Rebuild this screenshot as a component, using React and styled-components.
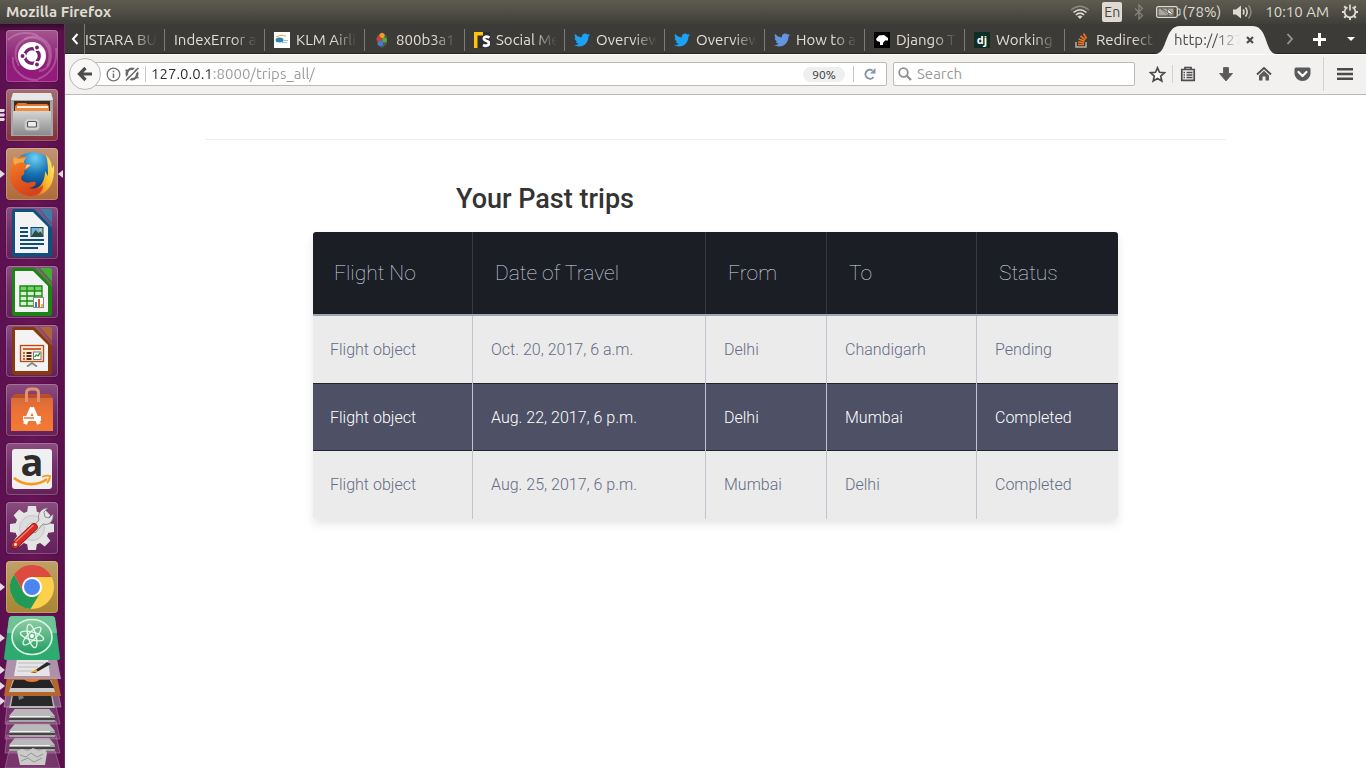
import React from 'react'
import styled, { createGlobalStyle, css } from 'styled-components'
import { FaTwitter } from 'react-icons/fa'

const uiFont = 'Ubuntu, "Noto Sans", "Open Sans", sans-serif'

const GlobalStyle = createGlobalStyle`
  * { box-sizing: border-box; }
  body { margin: 0; background: #fff; }
  button { border: 0; padding: 0; background: none; font: inherit; color: inherit; }
  svg { display: block; flex: none; }
`

/* ---------- top panel ---------- */

const Desktop = styled.div`
  display: flex; flex-direction: column; min-height: 100vh;
  font-family: ${uiFont};
`
const TopPanel = styled.header`
  display: flex; align-items: center; justify-content: space-between;
  height: 24px; padding: 0 7px 0 6px;
  background: linear-gradient(#5e5c50, #55534a 30%, #3f3e39);
  color: #dfdbd2; font-size: 15px; line-height: 20px;
`
const AppName = styled.div`
  font-size: 15px; font-weight: 700; font-family: Ubuntu, "Open Sans", sans-serif;
`
const Indicators = styled.div`
  display: flex; align-items: center; gap: 12px;
`
const Indicator = styled.button`
  display: flex; align-items: center; gap: 1px; height: 24px; white-space: nowrap;
`
const Lang = styled.span`
  width: 20px; height: 20px; border-radius: 2px; background: #dfdbd2; color: #45433d;
  font-size: 14px; line-height: 20px; text-align: center;
`

const WifiIcon = () => (
  <svg width="20" height="16" viewBox="0 0 20 16" fill="none" strokeLinecap="butt">
    <path d="M1 6Q10-1.500 19 6" stroke="#8b887f" strokeWidth="1.500" />
    <path d="M3.500 8.500Q10 3 16.500 8.500" stroke="#dfdbd2" strokeWidth="1.600" />
    <path d="M5.800 11Q10 7.200 14.200 11" stroke="#dfdbd2" strokeWidth="1.600" />
    <path d="M7.500 12.500Q10 10.500 12.500 12.500L10 15Z" fill="#dfdbd2" />
  </svg>
)
const BluetoothIcon = () => (
  <svg width="10" height="16" viewBox="0 0 10 16" fill="none" stroke="#85827a" strokeWidth="1.300">
    <path d="M1 4.500L8.500 11.500L5 15V1L8.500 4.500L1 11.500" />
  </svg>
)
const BatteryIcon = () => (
  <svg width="25" height="12" viewBox="0 0 25 12">
    <rect x=".7" y=".7" width="20.600" height="10.600" rx="1.500" fill="none" stroke="#dfdbd2" strokeWidth="1.300" />
    <path d="M22 3h2v6h-2" fill="none" stroke="#dfdbd2" />
    <rect x="2.500" y="2.500" width="15" height="7" fill="#aaa79f" />
    <path d="M5 2.500l7 4.500-1-4.500 8 7-7-2.500 1 3z" fill="#f7f4ec" stroke="#4b4943" strokeWidth=".7" />
  </svg>
)
const SoundIcon = () => (
  <svg width="20" height="16" viewBox="0 0 20 16" fill="none" strokeWidth="1.500">
    <path d="M0 5.500h3L8 1.500v13L3 10.500H0z" fill="#dfdbd2" />
    <path d="M10 5.500q2 2.500 0 5M12.500 3.500q3.500 4.500 0 9" stroke="#dfdbd2" />
    <path d="M15.500 1.500q5 6.500 0 13" stroke="#8b887f" />
  </svg>
)
const GearIcon = () => (
  <svg width="18" height="18" viewBox="0 0 18 18" fill="none" stroke="#dfdbd2">
    <path d="M6.500 4.200a5.400 5.400 0 1 0 5 0" strokeWidth="1.700" />
    <path d="M9 1.500v6" strokeWidth="1.700" />
    <path d="M3.200 3.200l2 2M14.800 3.200l-2 2M1 9h2.500M17 9h-2.500M3.200 14.800l2-2M14.800 14.800l-2-2M9 17v-2.500" strokeWidth="2" />
  </svg>
)

/* ---------- launcher ---------- */

const Workspace = styled.div`
  display: flex; flex: 1;
`
const Launcher = styled.nav`
  flex: none; width: 65px; padding-top: 6px;
  background: linear-gradient(#36082e, rgba(54,8,46,0) 8px), linear-gradient(90deg, #5c1050, #681657 50%, #5a0f4d);
  border-right: 1px solid #6f2a63;
`
const LauncherItems = styled.div`
  display: flex; flex-direction: column; gap: 7px;
`
const LauncherItem = styled.button`
  display: grid; grid-template-columns: 6px 52px 6px; align-items: center; height: 52px;
`
const Tile = styled.span`
  display: block; grid-column: 2; width: 52px; height: 52px; border-radius: 4px;
  background: ${p => p.$bg};
  box-shadow: inset 0 0 0 1px rgba(255,255,255,0.22), 0 0 2px rgba(0,0,0,0.35);
`
const glass = 'linear-gradient(#8b4d7f, #72316a 45%, #642059)'

const Pips = ({ side, n = 1 }) => (
  <svg width="5" height="40" viewBox="0 0 5 40" fill="#e3dbe1">
    {side === 'right' && <path d="M5 16v8l-5-4z" />}
    {side === 'left' && n === 1 && <path d="M0 16v8l5-4z" />}
    {n === 3 && <path d="M0 14h4l1 1-1 2H0zM0 18.500h4l1 1-1 2H0zM0 23h4l1 1-1 2H0z" />}
  </svg>
)

const DashIcon = () => (
  <svg width="52" height="52" viewBox="0 0 52 52">
    <g fill="none" stroke="#e3a5d2" strokeOpacity=".35" strokeWidth="2">
      <path d="M13 36C2 16 20 2 35 10c8 4 11 16 6 26" />
      <path d="M7 27c-2 14 12 24 25 23M18 9C30 3 46 9 45 26c0 9-5 14-12 15" />
      <path d="M2 10c8-8 22-9 30-4M50 18c2 14-4 26-18 31" />
    </g>
    <circle cx="26" cy="26" r="14" fill="#fff" />
    <circle cx="26" cy="26" r="7.300" fill="none" stroke="#77216f" strokeWidth="3.200" />
    <g stroke="#fff" strokeWidth="1.500">
      <path d="M13 26h8M31 17l-3 6M31 35l-3-6" />
      <circle cx="16.500" cy="26" r="2.700" fill="#77216f" />
      <circle cx="31" cy="17.500" r="2.700" fill="#77216f" />
      <circle cx="31" cy="34.500" r="2.700" fill="#77216f" />
    </g>
  </svg>
)
const FilesIcon = () => (
  <svg width="52" height="52" viewBox="0 0 52 52">
    <defs>
      <linearGradient id="steel" x2="0" y2="1"><stop stopColor="#d5d5d5" /><stop offset="1" stopColor="#8b8b8b" /></linearGradient>
    </defs>
    <path d="M7 4h38l2 6v37H5V10z" fill="#a5a5a5" />
    <path d="M7 4h38l2 7H5z" fill="#e6e6e6" />
    <rect x="8" y="12" width="36" height="12" fill="#3f2c25" />
    <path d="M9 17l3-3h8l1 1h20l2 2v6H9z" fill="#e07830" />
    <path d="M11 17h31v2H11z" fill="#fff3e7" />
    <path d="M9 19h34v4H9z" fill="#f08a3c" />
    <rect x="7" y="22" width="38" height="24" rx="1" fill="url(#steel)" />
    <rect x="19" y="30" width="14" height="11" rx="2.500" fill="#d2d2d2" stroke="#c2c2c2" />
    <rect x="21.500" y="32.500" width="9" height="5.500" rx="1" fill="#eee" stroke="#555" strokeWidth="1.200" />
  </svg>
)
const FirefoxIcon = () => (
  <svg width="52" height="52" viewBox="0 0 52 52">
    <defs>
      <radialGradient id="globe" cx=".55" cy=".15" r=".8"><stop stopColor="#6fd0f4" /><stop offset=".5" stopColor="#1674b5" /><stop offset="1" stopColor="#10306d" /></radialGradient>
      <linearGradient id="fox" x2=".4" y2="1"><stop stopColor="#f08a2c" /><stop offset=".6" stopColor="#e65a1d" /><stop offset="1" stopColor="#d4431c" /></linearGradient>
      <linearGradient id="tail" x1="1" x2="0" y2="1"><stop stopColor="#fff27a" /><stop offset=".5" stopColor="#f9bf2e" /><stop offset="1" stopColor="#ea6b1f" /></linearGradient>
    </defs>
    <circle cx="27" cy="24" r="20" fill="url(#globe)" />
    <path d="M5 19c0-4 2-8 3-11 1 1 2 3 3 3 3-3 7-3 10-2-2 1-4 4-3 6 1 2 5 1 6 2 0 3-4 4-6 6 0 2 1 3-1 4-3 2-2 6 2 7 4 2 7-1 10 0 3 2-2 6-6 6 6 2 12-2 15-6l5 3c-4 7-10 11-18 11C14 48 4 39 4 27c0-3 0-5 1-8z" fill="url(#fox)" />
    <path d="M40 7c4 4 6 8 6 13l2-3c1 18-5 28-18 31 6-4 7-7 7-11l-5 4c6-7 7-12 7-18l3 5c0-8 0-14-2-21z" fill="url(#tail)" />
    <path d="M8 9c5 3 9 2 13 0-2 2-4 4-3 6-4-1-7 0-9 2-2-2-2-5-1-8z" fill="#f6a849" />
    <path d="M19 21l6-4-4-.5z" fill="#f6d5a3" />
  </svg>
)
const OfficeDoc = ({ dark, light, children }) => (
  <svg width="52" height="52" viewBox="0 0 52 52">
    <path d="M6 5q0-3 3-3h19l18 18v27q0 3-3 3H9q-3 0-3-3z" fill={dark} />
    <path d="M9 5h18l15 15v26H9z" fill="#f3f3f3" />
    <path d="M34 2h10q2 0 2 2v12z" fill={light} />
    <path d="M29 2h3l14 15v4z" fill={light} opacity=".55" />
    {children}
  </svg>
)
const WriterIcon = () => (
  <OfficeDoc dark="#10507f" light="#3a7fa8">
    <path d="M14 21h8M14 25h8M14 29h8M14 33h24M14 37h24M14 41h18" stroke="#0d4d7c" strokeWidth="2" />
    <rect x="25" y="20.500" width="12" height="9" fill="#72b5dc" stroke="#104b76" />
    <path d="M25.500 29l4-6 3 3 2-1.500 3 4.500z" fill="#354d3e" />
    <circle cx="34.500" cy="23" r="1.300" fill="#f5c82c" />
  </OfficeDoc>
)
const CalcIcon = () => (
  <OfficeDoc dark="#1b8412" light="#3fb032">
    <rect x="14" y="20" width="22" height="20" fill="#d4f3cf" />
    <path d="M14 20h22v5H14z" fill="#79cf6d" />
    <path d="M14 20h22v20H14zM14 25h22M14 30h22M14 35h22M21 20v20M28.500 20v20" fill="none" stroke="#1d8a14" strokeWidth="1.400" />
    <rect x="27.500" y="31.500" width="10" height="10" fill="#fff" stroke="#888" />
    <path d="M29 36h2v5h-2z" fill="#1c83c6" /><path d="M32 33h2v8h-2z" fill="#e0541e" /><path d="M35 38h2v3h-2z" fill="#f6bd27" />
  </OfficeDoc>
)
const ImpressIcon = () => (
  <OfficeDoc dark="#87390f" light="#b0643a">
    <rect x="14.500" y="20.500" width="23" height="16" fill="#fbe9dd" stroke="#b24b16" strokeWidth="1.300" />
    <path d="M17 24h18" stroke="#d1662b" strokeWidth="2" />
    <path d="M17 28h2M17 31h2M17 34h2" stroke="#d1662b" strokeWidth="2" />
    <path d="M20.500 28h5M20.500 31h5M20.500 34h5" stroke="#5d2c13" strokeWidth="2" />
    <rect x="27.500" y="27" width="7.500" height="7.500" fill="#fff" stroke="#777" />
    <path d="M28.500 32l2-2 1.500 1 2-3" fill="none" stroke="#2f9a3a" strokeWidth="1.400" />
    <path d="M26 36.500v3M26 38l-5 3.500M26 38l5 3.500" stroke="#888" strokeWidth="1.700" />
  </OfficeDoc>
)
const SoftwareIcon = () => (
  <svg width="52" height="52" viewBox="0 0 52 52">
    <defs><linearGradient id="bag" x2="0" y2="1"><stop stopColor="#d96a38" /><stop offset=".4" stopColor="#ec7235" /><stop offset="1" stopColor="#f47a35" /></linearGradient></defs>
    <path d="M5 14l4-4h34l4 4z" fill="#b5502a" />
    <path d="M5 14h42v33H5z" fill="url(#bag)" />
    <path d="M20.500 18V9q0-4 4-4h4q4 0 4 4v9" fill="none" stroke="#e39372" strokeWidth="3" />
    <path d="M26 23.500L19 40M26 23.500L33 40" fill="none" stroke="#fff" strokeWidth="4" />
    <path d="M17 34.500h18" stroke="#fff" strokeWidth="5" />
    <path d="M18 34h10" stroke="#ed7536" strokeWidth="1.500" />
  </svg>
)
const AmazonIcon = () => (
  <svg width="52" height="52" viewBox="0 0 52 52">
    <rect x="6" y="6" width="40" height="40" rx="3" fill="#f0f0f0" />
    <text x="26" y="33" fontFamily="Open Sans, sans-serif" fontWeight="700" fontSize="38" textAnchor="middle" fill="#2d2d2d">a</text>
    <path d="M8 35c10 8 24 8 33 1" fill="none" stroke="#f79a1c" strokeWidth="2.700" />
    <path d="M36 34c4-2 8-1 8-1s0 4-3 7" fill="none" stroke="#f79a1c" strokeWidth="1.800" />
  </svg>
)
const SettingsIcon = () => (
  <svg width="52" height="52" viewBox="0 0 52 52">
    <g fill="#e4e4e4">
      <circle cx="26" cy="26" r="17" />
      <path d="M22 4h8l1 7h-10zM22 48h8l1-7h-10zM4 22v8l7 1v-10zM48 22v8l-7 1v-10z" />
      <path d="M22 4h8l1 7h-10zM22 48h8l1-7h-10zM4 22v8l7 1v-10zM48 22v8l-7 1v-10z" transform="rotate(45 26 26)" />
    </g>
    <circle cx="26" cy="26" r="12.500" fill="#dcdcdc" stroke="#c6c6c6" />
    <circle cx="26" cy="26" r="5" fill="#f4f4f4" stroke="#bbb" />
    <path d="M25 27l8-9c-2-6 2-12 9-12l-4 4 1 5 4 1 4-4c1 7-4 12-10 10l-8 9z" fill="#e2e2e2" stroke="#777" strokeWidth=".8" />
    <path d="M28 25L9 43" stroke="#8e1511" strokeWidth="7.500" strokeLinecap="round" />
    <path d="M28 25L9 43" stroke="#d92c25" strokeWidth="6" strokeLinecap="round" />
    <path d="M27 23.500L10 39.500" stroke="#f1827b" strokeWidth="1.300" strokeLinecap="round" />
    <circle cx="9.500" cy="42.500" r="1.400" fill="#fff" />
  </svg>
)
const ChromeIcon = () => (
  <svg width="52" height="52" viewBox="0 0 52 52">
    <circle cx="26" cy="26" r="22" fill="#fcd04a" />
    <path d="M26 16h19.700A22 22 0 0 0 8 13.400l9.300 17.600z" fill="#db4b40" />
    <path d="M8 13.400A22 22 0 0 0 24.500 48L34.700 31A10 10 0 0 1 17.300 31z" fill="#219a58" />
    <circle cx="26" cy="26" r="10" fill="#fff" />
    <circle cx="26" cy="26" r="8" fill="#4a86ee" />
  </svg>
)

const DiskFold = ({ y }) => (
  <g transform={`translate(0 ${y})`}>
    <path d="M7 0h49l4 18H5z" fill="#b18baa" fillOpacity=".3" stroke="#b98cb0" strokeOpacity=".5" />
    <path d="M15 3h34l6 8v4q0 1-1 1H10q-1 0-1-1v-4z" fill="#a7a7a7" />
    <path d="M15 3h34l6 7H9z" fill="#b9b9b9" />
    <path d="M9 12h46v2H9z" fill="#444" />
    <path d="M10 10.500h40" stroke="#f2f2f2" />
  </g>
)
const FoldedStack = () => (
  <svg width="64" height="155" viewBox="0 0 64 155">
    <defs><linearGradient id="atom" x2="0" y2="1"><stop stopColor="#8ccda3" /><stop offset="1" stopColor="#1f9d60" /></linearGradient></defs>
    <path d="M9 138h46l5 17H5z" fill="#b18baa" fillOpacity=".3" stroke="#b98cb0" strokeOpacity=".5" />
    <DiskFold y={122} />
    <DiskFold y={108} />
    <DiskFold y={93} />
    <path d="M17 138l5-2 6 2 5-3 6 3 6-2 2 4-2 12H20z" fill="#c9cbc9" />
    <path d="M20 142l6 2 5-4 6 4 6-3M21 148l7-3 6 4 8-4" stroke="#969896" fill="none" />
    <path d="M7 74h50l4 20H4z" fill="#8f6b89" fillOpacity=".8" stroke="#c19fba" strokeOpacity=".6" />
    <path d="M12 81h40l3 14H9z" fill="#b5b5b5" /><path d="M13 82h38l2 11H11z" fill="#29292b" /><path d="M18 82l5 1 1 2-5 2z" fill="#777" />
    <path d="M7 64h50l4 19H4z" fill="#b5662a" />
    <path d="M13 67h38l4 12H9z" fill="#cbcbcb" /><path d="M14 67h36l4 8H11z" fill="#242426" /><path d="M24 66c2 4 14 4 16 0z" fill="#e87c2d" />
    <path d="M7 46h50l4 20H4z" fill="#b69fb2" fillOpacity=".9" />
    <path d="M17 46h31l2 17H14z" fill="#e6e4e6" /><path d="M18 50h26M18 54h20M17 58h16" stroke="#bcbcbc" />
    <path d="M31 60l16-11 4 2-16 9z" fill="#2a2a2a" /><path d="M30 60l6-4 2 3z" fill="#dfac3c" />
    <path d="M9 5q1-2 3-2h40q2 0 3 2l5 40q0 2-2 2H6q-2 0-2-2z" fill="#2eab70" />
    <path d="M9 5q1-2 3-2h40q2 0 3 2l2 15H7z" fill="#6dc396" />
    <ellipse cx="32" cy="24" rx="20" ry="17.500" fill="url(#atom)" stroke="#dff3e6" strokeWidth="1.600" />
    <g fill="none" stroke="#e9f8ee" strokeWidth="1.300">
      <ellipse cx="32" cy="23" rx="12" ry="4" transform="rotate(15 32 23)" />
      <ellipse cx="32" cy="23" rx="12" ry="4" transform="rotate(75 32 23)" />
      <ellipse cx="32" cy="23" rx="12" ry="4" transform="rotate(135 32 23)" />
    </g>
    <circle cx="32" cy="23" r="2" fill="#fff" />
    <path d="M0 21v8l5-4zM0 53v8l5-4zM0 69v8l5-4zM0 84v8l5-4z" fill="#e3dbe1" />
  </svg>
)

const apps = [
  { name: 'Search your computer', icon: DashIcon, bg: 'linear-gradient(#a4568f, #8c1f77 60%, #96197d)' },
  { name: 'Files', icon: FilesIcon, bg: 'linear-gradient(#a36d74, #82303c)', left: 3 },
  { name: 'Firefox', icon: FirefoxIcon, bg: 'linear-gradient(#c39372, #b06a3a)', left: 1, right: true },
  { name: 'Writer', icon: WriterIcon, bg: glass },
  { name: 'Calc', icon: CalcIcon, bg: glass },
  { name: 'Impress', icon: ImpressIcon, bg: glass },
  { name: 'Ubuntu Software', icon: SoftwareIcon, bg: glass },
  { name: 'Amazon', icon: AmazonIcon, bg: glass },
  { name: 'System Settings', icon: SettingsIcon, bg: glass },
  { name: 'Chrome', icon: ChromeIcon, bg: 'linear-gradient(#c0a068, #a98432)', left: 1 },
]

/* ---------- browser ---------- */

const Browser = styled.div`
  display: flex; flex-direction: column; flex: 1; min-width: 0;
`
const TabStrip = styled.div`
  display: flex; align-items: center; height: 30px;
  background: #3c3b37; color: #e2ded6; font-size: 15px; line-height: 20px;
  box-shadow: inset 0 -1px #262522;
`
const TabList = styled.div`
  display: flex; flex: 1; min-width: 0; height: 30px;
`
const ScrollBack = styled.button`
  display: grid; place-items: center; width: 20px; height: 30px;
  border-right: 1px solid #7b7a76;
`
const Tab = styled.div`
  position: relative; display: flex; align-items: center; gap: 6px;
  flex: 0 0 ${p => (p.$clipped ? 80 : 100)}px; height: 30px; min-width: 0;
  padding: 2px 8px 0 ${p => (p.$clipped ? 0 : 9)}px;
  ${p => p.$active && css`
    padding-right: 9px; gap: 4px; color: #4c4c4c;
  `}
`
const TabLabel = styled.button`
  flex: 1; min-width: 0; height: 24px; overflow: hidden; white-space: nowrap; text-align: left;
  position: relative;
  mask-image: linear-gradient(90deg, #000 calc(100% - 24px), transparent);
`
const TabDivider = styled.span`
  position: absolute; right: 0; top: 5px; width: 1px; height: 22px; background: #7b7a76;
`
const ActiveShape = styled.svg`
  position: absolute; left: -10px; top: 0;
`
const CloseTab = styled.button`
  position: relative; flex: none; width: 12px; height: 12px; display: grid; place-items: center;
`
const StripButton = styled.button`
  display: grid; place-items: center; width: ${p => p.$w}px; height: 30px;
`

const KlmFav = () => (
  <svg width="16" height="16" viewBox="0 0 16 16">
    <rect width="16" height="16" fill="#fff" />
    <path d="M2 5q5-3 10-1" stroke="#f1a637" fill="none" />
    <ellipse cx="5.500" cy="8" rx="4" ry="2.500" fill="#2d86ab" /><path d="M9 8.500h5M8 10.500h5" stroke="#8fc7dc" />
  </svg>
)
const BallsFav = () => (
  <svg width="16" height="16" viewBox="0 0 16 16">
    <path d="M8 0l5 4v8l-5 4-5-4V4z" fill="#6a6862" opacity=".6" />
    <circle cx="8" cy="3.500" r="2.600" fill="#f59a23" /><circle cx="5" cy="7" r="2.500" fill="#e03a2f" />
    <circle cx="10.500" cy="8" r="2.500" fill="#4fae3c" /><circle cx="6.500" cy="11.500" r="2.700" fill="#3c7ed8" />
  </svg>
)
const SocialFav = () => (
  <svg width="16" height="16" viewBox="0 0 16 16">
    <rect width="16" height="16" fill="#2b2e33" />
    <path d="M0 0h9v3.500H3.500V16H0z" fill="#ffc20e" />
    <path d="M15.500 5.500c-3-1.500-6-1-5.500 1.500s5 1.500 5 4-3 3.500-6 2" fill="none" stroke="#fff" strokeWidth="2.800" />
  </svg>
)
const DjangoTutFav = () => (
  <svg width="16" height="16" viewBox="0 0 16 16">
    <rect width="16" height="16" fill="#000" />
    <path d="M2 7l3-3.500 5-.5 4 3v2.500h-3L9 11v2H6v-3L3 9z" fill="#fff" />
  </svg>
)
const DjFav = () => (
  <svg width="16" height="16" viewBox="0 0 16 16">
    <rect width="16" height="16" fill="#0d2e23" />
    <text x="8" y="11.500" fontFamily="Open Sans, sans-serif" fontWeight="700" fontSize="11" textAnchor="middle" fill="#fff">dj</text>
  </svg>
)
const StackFav = () => (
  <svg width="16" height="16" viewBox="0 0 16 16" fill="none">
    <path d="M2 10v5h10v-5" stroke="#b4b1aa" strokeWidth="1.500" />
    <path d="M4 12.500h6M4 10l6 .8M4.700 7l5.800 2.200M6.500 4l4.800 3.800M9.500 1.500l3 5" stroke="#ee7620" strokeWidth="1.600" />
  </svg>
)

const tabs = [
  { title: 'ISTARA BU', clipped: true },
  { title: 'IndexError a' },
  { title: 'KLM Airli', icon: <KlmFav /> },
  { title: '800b3a1c', icon: <BallsFav /> },
  { title: 'Social Me', icon: <SocialFav /> },
  { title: 'Overview', icon: <FaTwitter size={16} color="#1da1f2" /> },
  { title: 'Overview', icon: <FaTwitter size={16} color="#1da1f2" /> },
  { title: 'How to a', icon: <FaTwitter size={16} color="#6495e0" /> },
  { title: 'Django T', icon: <DjangoTutFav /> },
  { title: 'Working', icon: <DjFav /> },
  { title: 'Redirect', icon: <StackFav />, last: true },
]

const NavBar = styled.div`
  display: flex; align-items: center; height: 41px; padding: 0 6px 0 4px;
  background: #f2f1f0; border-bottom: 1px solid #bebbb7; box-shadow: inset 0 1px #fdfdfd;
  color: #4c4c4c;
`
const BackButton = styled.button`
  position: relative; z-index: 1; flex: none;
  display: grid; place-items: center; width: 32px; height: 32px; margin-right: -12px;
  border: 1px solid #bab7b3; border-radius: 50%; background: #f8f8f7;
`
const Field = styled.div`
  display: flex; align-items: center; height: 24px; min-width: 0;
  background: #fff; border: 1px solid #bebbb7; border-radius: 2px;
`
const UrlField = styled(Field)`
  flex: 1; padding: 0 8px 0 16px; gap: 3px;
`
const SearchField = styled(Field)`
  flex: 0 0 242px; margin: 0 7px 0 6px; padding: 0 4px; gap: 5px;
`
const TextInput = styled.input`
  flex: 1; min-width: 0; height: 22px; padding: 0; border: 0; outline: 0; background: none;
  font: 15px/22px ${uiFont}; color: #333;
  &::placeholder { color: #999; opacity: 1; }
`
/* host part dark, path part grey */
const UrlInput = styled(TextInput)`
  color: transparent;
  background: linear-gradient(90deg, #2e2e2e 62px, #999 62px);
  background-clip: text;
`
const FieldDivider = styled.span`
  flex: none; width: 1px; height: 16px; margin: 0 ${p => p.$gap}px; background: #c9c7c4;
`
const Zoom = styled.button`
  flex: none; width: 42px; height: 15px; border-radius: 8px; background: #efefef;
  font-size: 12px; line-height: 15px; color: #333;
`
const ReloadButton = styled.button`
  display: grid; place-items: center; flex: none; width: 16px; height: 22px;
`
const ToolButton = styled.button`
  display: grid; place-items: center; flex: none; width: 30px; height: 30px;
`
const Tools = styled.div`
  display: flex; gap: 8px;
`
const ToolDivider = styled.span`
  flex: none; width: 1px; height: ${p => p.$h}px; background: #d3d1ce;
  margin: 0 ${p => (p.$spaced ? 6 : 0)}px;
`

const StarIcon = () => (
  <svg width="17" height="17" viewBox="0 0 17 17"><path d="M8.500 1.800l2 4.500 4.900.5-3.700 3.300 1.100 4.900-4.300-2.500-4.300 2.500 1.100-4.900L1.600 6.800l4.900-.5z" fill="#fbfbfb" stroke="#4c4c4c" strokeWidth="1.700" /></svg>
)
const ListIcon = () => (
  <svg width="16" height="16" viewBox="0 0 16 16" fill="none" stroke="#4c4c4c" strokeWidth="1.700">
    <path d="M1.800 3.500h12.400v10.800H1.800z" /><path d="M5 3V1.500h6V3" />
    <path d="M3.500 6.500h1.500M6.500 6.500h6M3.500 9h1.500M6.500 9h6M3.500 11.500h1.500M6.500 11.500h6" strokeWidth="1.300" />
  </svg>
)
const DownIcon = () => (
  <svg width="16" height="16" viewBox="0 0 16 16"><path d="M5.500 1.500h5v6h4L8 15 1.500 7.500h4z" fill="#5a5a5a" stroke="#4c4c4c" strokeWidth=".7" /></svg>
)
const HomeIcon = () => (
  <svg width="16" height="16" viewBox="0 0 16 16"><path d="M1 8.500l7-6.500 7 6.500" fill="none" stroke="#4c4c4c" strokeWidth="1.800" /><path d="M3 9.500l5-4.700 5 4.700v5H9.500v-4h-3v4H3z" fill="#5a5a5a" /></svg>
)
const PocketIcon = () => (
  <svg width="17" height="16" viewBox="0 0 17 16"><path d="M2 1.500h13q1.500 0 1.500 1.500v4.500a8 7.500 0 0 1-16 0V3q0-1.500 1.500-1.500z" fill="#5a5a5a" /><path d="M4.500 6l4 4 4-4" fill="none" stroke="#fff" strokeWidth="2.200" strokeLinecap="round" strokeLinejoin="round" /></svg>
)
const MenuIcon = () => (
  <svg width="16" height="14" viewBox="0 0 16 14"><path d="M0 1h16v2.500H0zM0 5.700h16v2.500H0zM0 10.400h16v2.500H0z" fill="#4a4a4a" /></svg>
)

/* ---------- page ---------- */

const Page = styled.main`
  flex: 1; padding-top: 44px; background: #fff; font-family: Roboto, sans-serif;
`
const Container = styled.div`
  max-width: 1021px; margin: 0 auto; border-top: 1px solid #eee; padding-top: 41px;
`
const Title = styled.h3`
  margin: 0 0 15px; padding-left: 251px;
  font-size: 27px; line-height: 36px; font-weight: 500; color: #333;
`
const TripsTable = styled.table`
  width: 805px; max-width: 100%; margin: 0 auto; table-layout: fixed;
  border-collapse: separate; border-spacing: 0;
  border-radius: 3px; overflow: hidden; box-shadow: 0 5px 10px rgba(0,0,0,0.1);
`
const Th = styled.th`
  width: ${p => p.$w}px; height: 84px; padding: 0 21px; text-align: left; vertical-align: middle;
  background: #1b1e24; color: #d5dde5; font-size: 21px; line-height: 28px; font-weight: 100;
  border-bottom: 2px solid #9ea7af;
  background-image: linear-gradient(#343a45, #343a45);
  background-size: 1px 100%; background-repeat: no-repeat; background-position: right;
  & + & { padding-left: 22px; }
  &:last-child { background-image: none; }
`
const Td = styled.td`
  height: 68px; padding: 0 17px; vertical-align: middle;
  font-size: 16px; line-height: 22px; font-weight: 300;
  border-right: 1px solid #c1c3d1;
  & + & { padding-left: 18px; }
  &:last-child { border-right: 0; }
`
const Row = styled.tr`
  background: ${p => (p.$hovered ? '#4e5066' : '#ebebeb')};
  color: ${p => (p.$hovered ? '#fff' : '#666b85')};
  ${p => p.$hovered && css`
    ${Td} { padding-top: 1px; box-shadow: inset 0 1px #22262e, inset 0 -1px #22262e; }
  `}
  &:first-child ${Td} { height: 67px; }
`

const columns = [['Flight No', 160], ['Date of Travel', 233], ['From', 121], ['To', 150], ['Status', 141]]
const trips = [
  ['Flight object', 'Oct. 20, 2017, 6 a.m.', 'Delhi', 'Chandigarh', 'Pending'],
  ['Flight object', 'Aug. 22, 2017, 6 p.m.', 'Delhi', 'Mumbai', 'Completed'],
  ['Flight object', 'Aug. 25, 2017, 6 p.m.', 'Mumbai', 'Delhi', 'Completed'],
]

function App() {
  return (
    <Desktop>
      <GlobalStyle />
      <TopPanel>
        <AppName>Mozilla Firefox</AppName>
        <Indicators>
          <Indicator aria-label="Network"><WifiIcon /></Indicator>
          <Indicator><Lang>En</Lang></Indicator>
          <Indicator aria-label="Bluetooth"><BluetoothIcon /></Indicator>
          <Indicator><BatteryIcon />(78%)</Indicator>
          <Indicator aria-label="Sound"><SoundIcon /></Indicator>
          <Indicator>10:10 AM</Indicator>
          <Indicator aria-label="Session"><GearIcon /></Indicator>
        </Indicators>
      </TopPanel>

      <Workspace>
        <Launcher>
          <LauncherItems>
            {apps.map(({ name, icon: Icon, bg, left, right }) => (
              <LauncherItem key={name} aria-label={name}>
                {left && <Pips side="left" n={left} />}
                <Tile $bg={bg}><Icon /></Tile>
                {right && <Pips side="right" />}
              </LauncherItem>
            ))}
          </LauncherItems>
          <FoldedStack />
        </Launcher>

        <Browser>
          <TabStrip>
            <ScrollBack aria-label="Scroll tabs back">
              <svg width="8" height="12" viewBox="0 0 8 12"><path d="M6.500 1L2 6l4.500 5" fill="none" stroke="#fff" strokeWidth="2" /></svg>
            </ScrollBack>
            <TabList>
              {tabs.map((t, i) => (
                <Tab key={i} $clipped={t.clipped}>
                  {t.icon}
                  <TabLabel>{t.title}</TabLabel>
                  {!t.last && <TabDivider />}
                </Tab>
              ))}
              <Tab $active>
                <ActiveShape width="122" height="30" viewBox="0 0 122 30">
                  <path d="M0 30C13 30 9 2 25 2h72c17 0 12 28 25 28z" fill="#f2f1f0" />
                </ActiveShape>
                <TabLabel>http://127</TabLabel>
                <CloseTab aria-label="Close tab">
                  <svg width="8" height="8" viewBox="0 0 8 8"><path d="M1 1l6 6M7 1L1 7" stroke="#4c4c4c" strokeWidth="2.200" /></svg>
                </CloseTab>
              </Tab>
            </TabList>
            <StripButton $w={24} aria-label="Scroll tabs forward">
              <svg width="8" height="12" viewBox="0 0 8 12"><path d="M1.500 1L6 6l-4.500 5" fill="none" stroke="#9b9993" strokeWidth="1.800" /></svg>
            </StripButton>
            <StripButton $w={34} aria-label="New tab">
              <svg width="13" height="13" viewBox="0 0 13 13"><path d="M6.500 0v13M0 6.500h13" stroke="#fff" strokeWidth="3" /></svg>
            </StripButton>
            <StripButton $w={30} aria-label="List all tabs">
              <svg width="8" height="4" viewBox="0 0 8 4"><path d="M0 0h8L4 4z" fill="#fff" /></svg>
            </StripButton>
          </TabStrip>

          <NavBar>
            <BackButton aria-label="Back">
              <svg width="16" height="16" viewBox="0 0 16 16"><path d="M15 8H3M8.500 2L2.500 8l6 6" fill="none" stroke="#4c4c4c" strokeWidth="3.200" /></svg>
            </BackButton>
            <UrlField>
              <svg width="15" height="15" viewBox="0 0 15 15"><circle cx="7.500" cy="7.500" r="6.300" fill="none" stroke="#737373" strokeWidth="1.300" /><path d="M7.500 6.500v4.500M7.500 3.700v1.600" stroke="#737373" strokeWidth="1.600" /></svg>
              <svg width="16" height="16" viewBox="0 0 16 16" fill="none" stroke="#6a6a6a">
                <circle cx="8" cy="8" r="5.200" strokeWidth="2.600" />
                <path d="M1.500 4l3 1.500M14.500 12l-3-1.500M4 14l1.500-2M12 2l-1.500 2" strokeWidth="1.600" />
                <path d="M1 13L13 1" stroke="#fff" strokeWidth="1.600" /><path d="M2 14.500L14.500 2" strokeWidth="1.700" />
                <path d="M3.500 15L15 3.500" stroke="#fff" strokeWidth="1.200" />
              </svg>
              <FieldDivider $gap={2} />
              <UrlInput aria-label="Address" defaultValue="127.0.0.1:8000/trips_all/" />
              <Zoom>90%</Zoom>
              <FieldDivider $gap={5} />
              <ReloadButton aria-label="Reload">
                <svg width="12" height="12" viewBox="0 0 12 12"><path d="M9.500 9A4.500 4.500 0 1 1 8.500 2.500" fill="none" stroke="#8493a5" strokeWidth="2" /><path d="M11.500 0v5.500H6z" fill="#8493a5" /></svg>
              </ReloadButton>
            </UrlField>
            <SearchField>
              <svg width="14" height="14" viewBox="0 0 14 14" fill="none" stroke="#8f8f8f"><circle cx="5.500" cy="5.500" r="4.300" strokeWidth="1.800" /><path d="M8.500 8.500l4.500 4.500" strokeWidth="2.400" /></svg>
              <TextInput aria-label="Search" placeholder="Search" />
            </SearchField>
            <ToolButton aria-label="Bookmark this page"><StarIcon /></ToolButton>
            <ToolDivider $h={18} />
            <Tools>
              <ToolButton aria-label="Bookmarks"><ListIcon /></ToolButton>
              <ToolButton aria-label="Downloads"><DownIcon /></ToolButton>
              <ToolButton aria-label="Home"><HomeIcon /></ToolButton>
              <ToolButton aria-label="Pocket"><PocketIcon /></ToolButton>
            </Tools>
            <ToolDivider $h={34} $spaced />
            <ToolButton aria-label="Menu"><MenuIcon /></ToolButton>
          </NavBar>

          <Page>
            <Container>
              <Title>Your Past trips</Title>
              <TripsTable>
                <thead>
                  <tr>
                    {columns.map(([label, w]) => <Th key={label} $w={w} scope="col">{label}</Th>)}
                  </tr>
                </thead>
                <tbody>
                  {trips.map((trip, i) => (
                    <Row key={i} $hovered={i === 1}>
                      {trip.map((cell, j) => <Td key={j}>{cell}</Td>)}
                    </Row>
                  ))}
                </tbody>
              </TripsTable>
            </Container>
          </Page>
        </Browser>
      </Workspace>
    </Desktop>
  )
}

export default App
